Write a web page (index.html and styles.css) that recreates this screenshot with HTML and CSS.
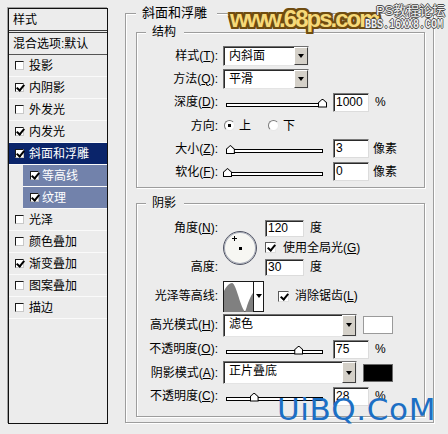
FILE: index.html
```html
<!DOCTYPE html>
<html lang="zh-CN">
<head>
    <meta charset="UTF-8">
    <meta name="viewport" content="width=device-width, initial-scale=1.0">
    <title>图层样式 - 斜面和浮雕</title>
    <link rel="stylesheet" href="styles.css">
</head>
<body>
    <div class="style-list">
        <div class="list-head">样式</div>
        <div class="list-blend">混合选项:默认</div>
        <div class="item"><span class="cb"></span>投影</div>
        <div class="item"><span class="cb on"></span>内阴影</div>
        <div class="item"><span class="cb"></span>外发光</div>
        <div class="item"><span class="cb on"></span>内发光</div>
        <div class="item selected"><span class="cb on"></span>斜面和浮雕</div>
        <div class="item sub"><span class="cb on"></span>等高线</div>
        <div class="item sub"><span class="cb on"></span>纹理</div>
        <div class="item"><span class="cb"></span>光泽</div>
        <div class="item"><span class="cb"></span>颜色叠加</div>
        <div class="item"><span class="cb on"></span>渐变叠加</div>
        <div class="item"><span class="cb"></span>图案叠加</div>
        <div class="item"><span class="cb"></span>描边</div>
    </div>

    <fieldset class="panel">
        <legend>斜面和浮雕</legend>

        <fieldset class="group">
            <legend>结构</legend>
            <div class="rows rows-struct">
                <span class="lbl">样式(<u>T</u>):</span>
                <div class="ctl"><span class="dropdown"><span class="dd-text">内斜面</span><i class="dd-btn"></i></span></div>

                <span class="lbl">方法(<u>Q</u>):</span>
                <div class="ctl"><span class="dropdown"><span class="dd-text">平滑</span><i class="dd-btn"></i></span></div>

                <span class="lbl">深度(<u>D</u>):</span>
                <div class="ctl">
                    <span class="slider"><i class="thumb" style="left: 100%"></i></span>
                    <span class="field">1000</span><span class="unit">%</span>
                </div>

                <span class="lbl">方向:</span>
                <div class="ctl">
                    <span class="radio on"></span><span class="radio-text">上</span>
                    <span class="radio"></span><span class="radio-text">下</span>
                </div>

                <span class="lbl">大小(<u>Z</u>):</span>
                <div class="ctl">
                    <span class="slider"><i class="thumb" style="left: 3%"></i></span>
                    <span class="field">3</span><span class="unit px">像素</span>
                </div>

                <span class="lbl">软化(<u>F</u>):</span>
                <div class="ctl">
                    <span class="slider"><i class="thumb" style="left: 0%"></i></span>
                    <span class="field">0</span><span class="unit px">像素</span>
                </div>
            </div>
        </fieldset>

        <fieldset class="group shade">
            <legend>阴影</legend>
            <div class="angle-block">
                <span class="lbl">角度(<u>N</u>):</span>
                <span class="dial"><i class="cross"></i><i class="dot"></i></span>
                <div class="ctl"><span class="field wide">120</span><span class="unit">度</span></div>
                <div class="ctl global"><span class="check on"></span>使用全局光(<u>G</u>)</div>
                <span class="lbl alt">高度:</span>
                <div class="ctl alt"><span class="field wide">30</span><span class="unit">度</span></div>
            </div>

            <div class="rows rows-contour">
                <span class="lbl">光泽等高线:</span>
                <div class="ctl">
                    <span class="contour">
                        <svg width="29" height="29" viewBox="0 0 29 29">
                            <path d="M0 29 L0 8 C2 4 5 0 8 0 C10 0 12 6 14 12 C16 18 18 25 21 29 Z" fill="#808080"/>
                            <path d="M21 29 C23 24 25 15 29 10 L29 29 Z" fill="#808080"/>
                        </svg>
                        <i class="contour-btn"></i>
                    </span>
                    <span class="check on"></span><span class="check-text">消除锯齿(<u>L</u>)</span>
                </div>
            </div>

            <div class="rows rows-mode">
                <span class="lbl">高光模式(<u>H</u>):</span>
                <div class="ctl">
                    <span class="dropdown long"><span class="dd-text">滤色</span><i class="dd-btn"></i></span>
                    <span class="swatch white"></span>
                </div>

                <span class="lbl">不透明度(<u>O</u>):</span>
                <div class="ctl">
                    <span class="slider"><i class="thumb" style="left: 75%"></i></span>
                    <span class="field">75</span><span class="unit">%</span>
                </div>

                <span class="lbl">阴影模式(<u>A</u>):</span>
                <div class="ctl">
                    <span class="dropdown long"><span class="dd-text">正片叠底</span><i class="dd-btn"></i></span>
                    <span class="swatch black"></span>
                </div>

                <span class="lbl">不透明度(<u>C</u>):</span>
                <div class="ctl">
                    <span class="slider"><i class="thumb" style="left: 28%"></i></span>
                    <span class="field">28</span><span class="unit">%</span>
                </div>
            </div>
        </fieldset>
    </fieldset>

    <div class="wm-68ps">www.68ps.com</div>
    <div class="wm-bbs"><span class="wm-cn">PS教程论坛</span><span class="wm-en">BBS.16XX8.COM</span></div>
    <div class="wm-uibq">UiBQ.CoM</div>
</body>
</html>
```

FILE: styles.css
```css
* {
    box-sizing: border-box;
}

body {
    margin: 0;
    width: 448px;
    height: 434px;
    overflow: hidden;
    position: relative;
    display: flex;
    align-items: flex-start;
    background: #ececec;
    color: #000;
    font: 12px/14px "Liberation Sans", "Noto Sans CJK SC", sans-serif;
}

u {
    text-decoration: underline;
    text-underline-offset: 1px;
}

/* ---------- left style list ---------- */
.style-list {
    margin: 8px 0 0 8px;
    width: 100px;
    height: 416px;
    border: 1px solid #111;
    box-shadow: -1px -1px 0 #a0a0a0;
    background: #ececec;
}

.list-head {
    height: 24px;
    padding: 4px 0 0 4px;
    border-bottom: 3px double #3a3a3a;
}

.list-blend {
    height: 22px;
    padding: 4px 0 0 4px;
    border-bottom: 1px solid #555;
}

.item {
    height: 22px;
    display: flex;
    align-items: center;
    gap: 5px;
    padding-left: 6px;
    border-bottom: 1px solid #fafafa;
}

.item.selected {
    background: #0a246a;
    color: #fff;
}

.item.sub {
    margin-left: 14px;
    padding-left: 7px;
    gap: 3px;
    background: #7282ab;
    color: #fff;
}

.cb {
    position: relative;
    width: 9px;
    height: 9px;
    flex: none;
    background: #fff;
    border: 1px solid;
    border-color: #1a1a1a #c8c8c8 #c8c8c8 #1a1a1a;
}

.cb.on::after,
.check.on::after {
    content: "";
    position: absolute;
    left: 2px;
    top: -1px;
    width: 3px;
    height: 6px;
    border: solid #000;
    border-width: 0 2px 2px 0;
    transform: rotate(40deg);
}

/* ---------- group boxes ---------- */
fieldset {
    margin: 0;
    min-width: 0;
    border: 1px solid #9d9d9d;
    box-shadow: inset 1px 1px 0 #fff, 1px 1px 0 #fff;
}

legend {
    line-height: 14px;
    background: #ececec;
}

.panel {
    margin: 6px 0 0 17px;
    width: 309px;
    height: 417px;
    padding: 5px 8px 5px 10px;
}

.panel > legend {
    padding: 0 10px 0 6px;
    font-size: 13px;
}

.group {
    width: 289px;
    height: 163px;
    padding: 5px 0 4px 0;
}

.group > legend {
    margin-left: 9px;
    padding: 0 8px 0 6px;
}

.group.shade {
    margin-top: 8px;
    height: 221px;
    padding: 8px 0 8px 0;
}

/* ---------- form rows ---------- */
.rows {
    display: grid;
    grid-template-columns: 81px 1fr;
    column-gap: 5px;
    align-items: center;
}

.rows-struct {
    grid-template-rows: 23px 23px 24px 23px 23px 23px;
}

.rows-contour {
    margin-top: 2px;
    grid-template-rows: 34px;
}

.rows-mode {
    grid-template-rows: 24px 24px 23px 24px;
}

.lbl {
    text-align: right;
    white-space: nowrap;
}

.ctl {
    display: flex;
    align-items: center;
}

.dropdown {
    display: flex;
    width: 86px;
    height: 20px;
    background: #fff;
    border: 1px solid;
    border-color: #6f6f6f #e4e4e4 #e4e4e4 #6f6f6f;
    box-shadow: inset 1px 1px 0 #2a2a2a;
}

.dropdown.long {
    width: 134px;
    height: 23px;
}

.dd-text {
    flex: 1;
    padding: 2px 0 0 5px;
    line-height: 15px;
}

.dd-btn {
    width: 14px;
    display: flex;
    align-items: center;
    justify-content: center;
    background: #d4d0c8;
    border: 1px solid;
    border-color: #fff #404040 #404040 #fff;
}

.dd-btn::after,
.contour-btn::after {
    content: "";
    border-left: 3px solid transparent;
    border-right: 3px solid transparent;
    border-top: 4px solid #000;
}

.slider {
    position: relative;
    width: 97px;
    height: 4px;
    margin: 5px 0 0 3px;
    background: #fff;
    border: 1px solid #000;
}

.thumb {
    position: absolute;
    bottom: -2px;
    width: 9px;
    height: 9px;
    margin-left: -4px;
    background: #000;
    clip-path: polygon(0 100%, 0 45%, 50% 0, 100% 45%, 100% 100%);
}

.thumb::after {
    content: "";
    position: absolute;
    inset: 1px;
    background: #fff;
    clip-path: polygon(0 100%, 0 45%, 50% 0, 100% 45%, 100% 100%);
}

.field {
    width: 36px;
    height: 19px;
    margin-left: 10px;
    padding: 1px 0 0 2px;
    line-height: 15px;
    background: #fff;
    border: 1px solid;
    border-color: #7a7a7a #dcdcdc #dcdcdc #7a7a7a;
    box-shadow: inset 1px 1px 0 #2a2a2a;
}

.field.wide {
    width: 39px;
    height: 17px;
    margin-left: 0;
    padding-top: 0;
}

.unit {
    margin-left: 6px;
}

.unit.px {
    margin-left: 4px;
}

.radio {
    position: relative;
    width: 11px;
    height: 11px;
    margin-left: 1px;
    border-radius: 50%;
    background: #fff;
    border: 1px solid;
    border-color: #7a7a7a #e8e8e8 #e8e8e8 #7a7a7a;
}

.radio.on::after {
    content: "";
    position: absolute;
    left: 3px;
    top: 3px;
    width: 3px;
    height: 3px;
    background: #000;
}

.radio-text {
    margin: 0 16px 0 4px;
}

/* ---------- angle dial ---------- */
.angle-block {
    display: grid;
    grid-template-columns: 81px 37px 1fr;
    grid-template-rows: 20px 19px 20px;
    column-gap: 5px;
    align-items: center;
}

.angle-block .dial {
    grid-column: 2;
    grid-row: 1 / 4;
}

.angle-block .global {
    grid-column: 3;
    grid-row: 2;
}

.angle-block .alt {
    grid-row: 3;
}

.angle-block .lbl.alt {
    grid-column: 1;
}

.angle-block .ctl.alt {
    grid-column: 3;
}

.dial {
    position: relative;
    width: 34px;
    height: 34px;
    border-radius: 50%;
    background: #f7f7f3;
    border: 1px solid #505464;
    box-shadow: inset 0 0 0 1px #a8acb8;
}

.dial .dot {
    position: absolute;
    left: 15px;
    top: 15px;
    width: 3px;
    height: 3px;
    background: #000;
}

.dial .cross {
    position: absolute;
    left: 8px;
    top: 4px;
    width: 5px;
    height: 5px;
    background:
        linear-gradient(#000, #000) 2px 0 / 1px 5px no-repeat,
        linear-gradient(#000, #000) 0 2px / 5px 1px no-repeat;
}

.check {
    position: relative;
    width: 11px;
    height: 11px;
    flex: none;
    background: #fff;
    border: 1px solid;
    border-color: #5a5a5a #e0e0e0 #e0e0e0 #5a5a5a;
}

.check.on::after {
    left: 3px;
    top: 0;
}

.global .check {
    margin-right: 7px;
}

.check-text {
    margin-left: 6px;
}

/* ---------- contour picker ---------- */
.contour {
    display: flex;
    width: 41px;
    height: 31px;
    background: #fff;
    border: 1px solid #1a1a1a;
    margin-right: 14px;
}

.contour svg {
    display: block;
    margin-top: 1px;
}

.contour-btn {
    flex: 1;
    display: flex;
    align-items: center;
    justify-content: center;
    border-left: 1px solid #1a1a1a;
}

.swatch {
    width: 30px;
    height: 18px;
    margin-left: 6px;
    border: 1px solid #9a9a9a;
}

.swatch.white {
    background: #fff;
}

.swatch.black {
    background: #000;
    border-color: #6a6a6a;
}

/* ---------- watermarks over the screenshot ---------- */
.wm-68ps {
    position: absolute;
    left: 230px;
    top: 7px;
    font: bold 24px/24px "Liberation Sans", sans-serif;
    letter-spacing: -2px;
    color: #f6d978;
    text-shadow:
        2px 0 0 #6f4c10, -2px 0 0 #6f4c10, 0 2px 0 #6f4c10, 0 -2px 0 #6f4c10,
        2px 2px 0 #6f4c10, -2px -2px 0 #6f4c10, 2px -2px 0 #6f4c10, -2px 2px 0 #6f4c10;
}

.wm-bbs {
    position: absolute;
    left: 365px;
    top: 3px;
    display: flex;
    flex-direction: column;
    color: #f0f0f0;
    text-shadow: 1px 0 0 #4a4a4a, -1px 0 0 #4a4a4a, 0 1px 0 #4a4a4a, 0 -1px 0 #4a4a4a;
}

.wm-cn {
    margin-left: 11px;
    font-size: 13px;
    line-height: 15px;
}

.wm-en {
    font: bold 13px/13px "Liberation Mono", monospace;
    transform: scaleX(0.77);
    transform-origin: left;
    white-space: nowrap;
}

.wm-uibq {
    position: absolute;
    left: 277px;
    top: 394px;
    font: 31px/31px "DejaVu Sans", sans-serif;
    letter-spacing: 0.6px;
    color: #1c6fc4;
}
```
